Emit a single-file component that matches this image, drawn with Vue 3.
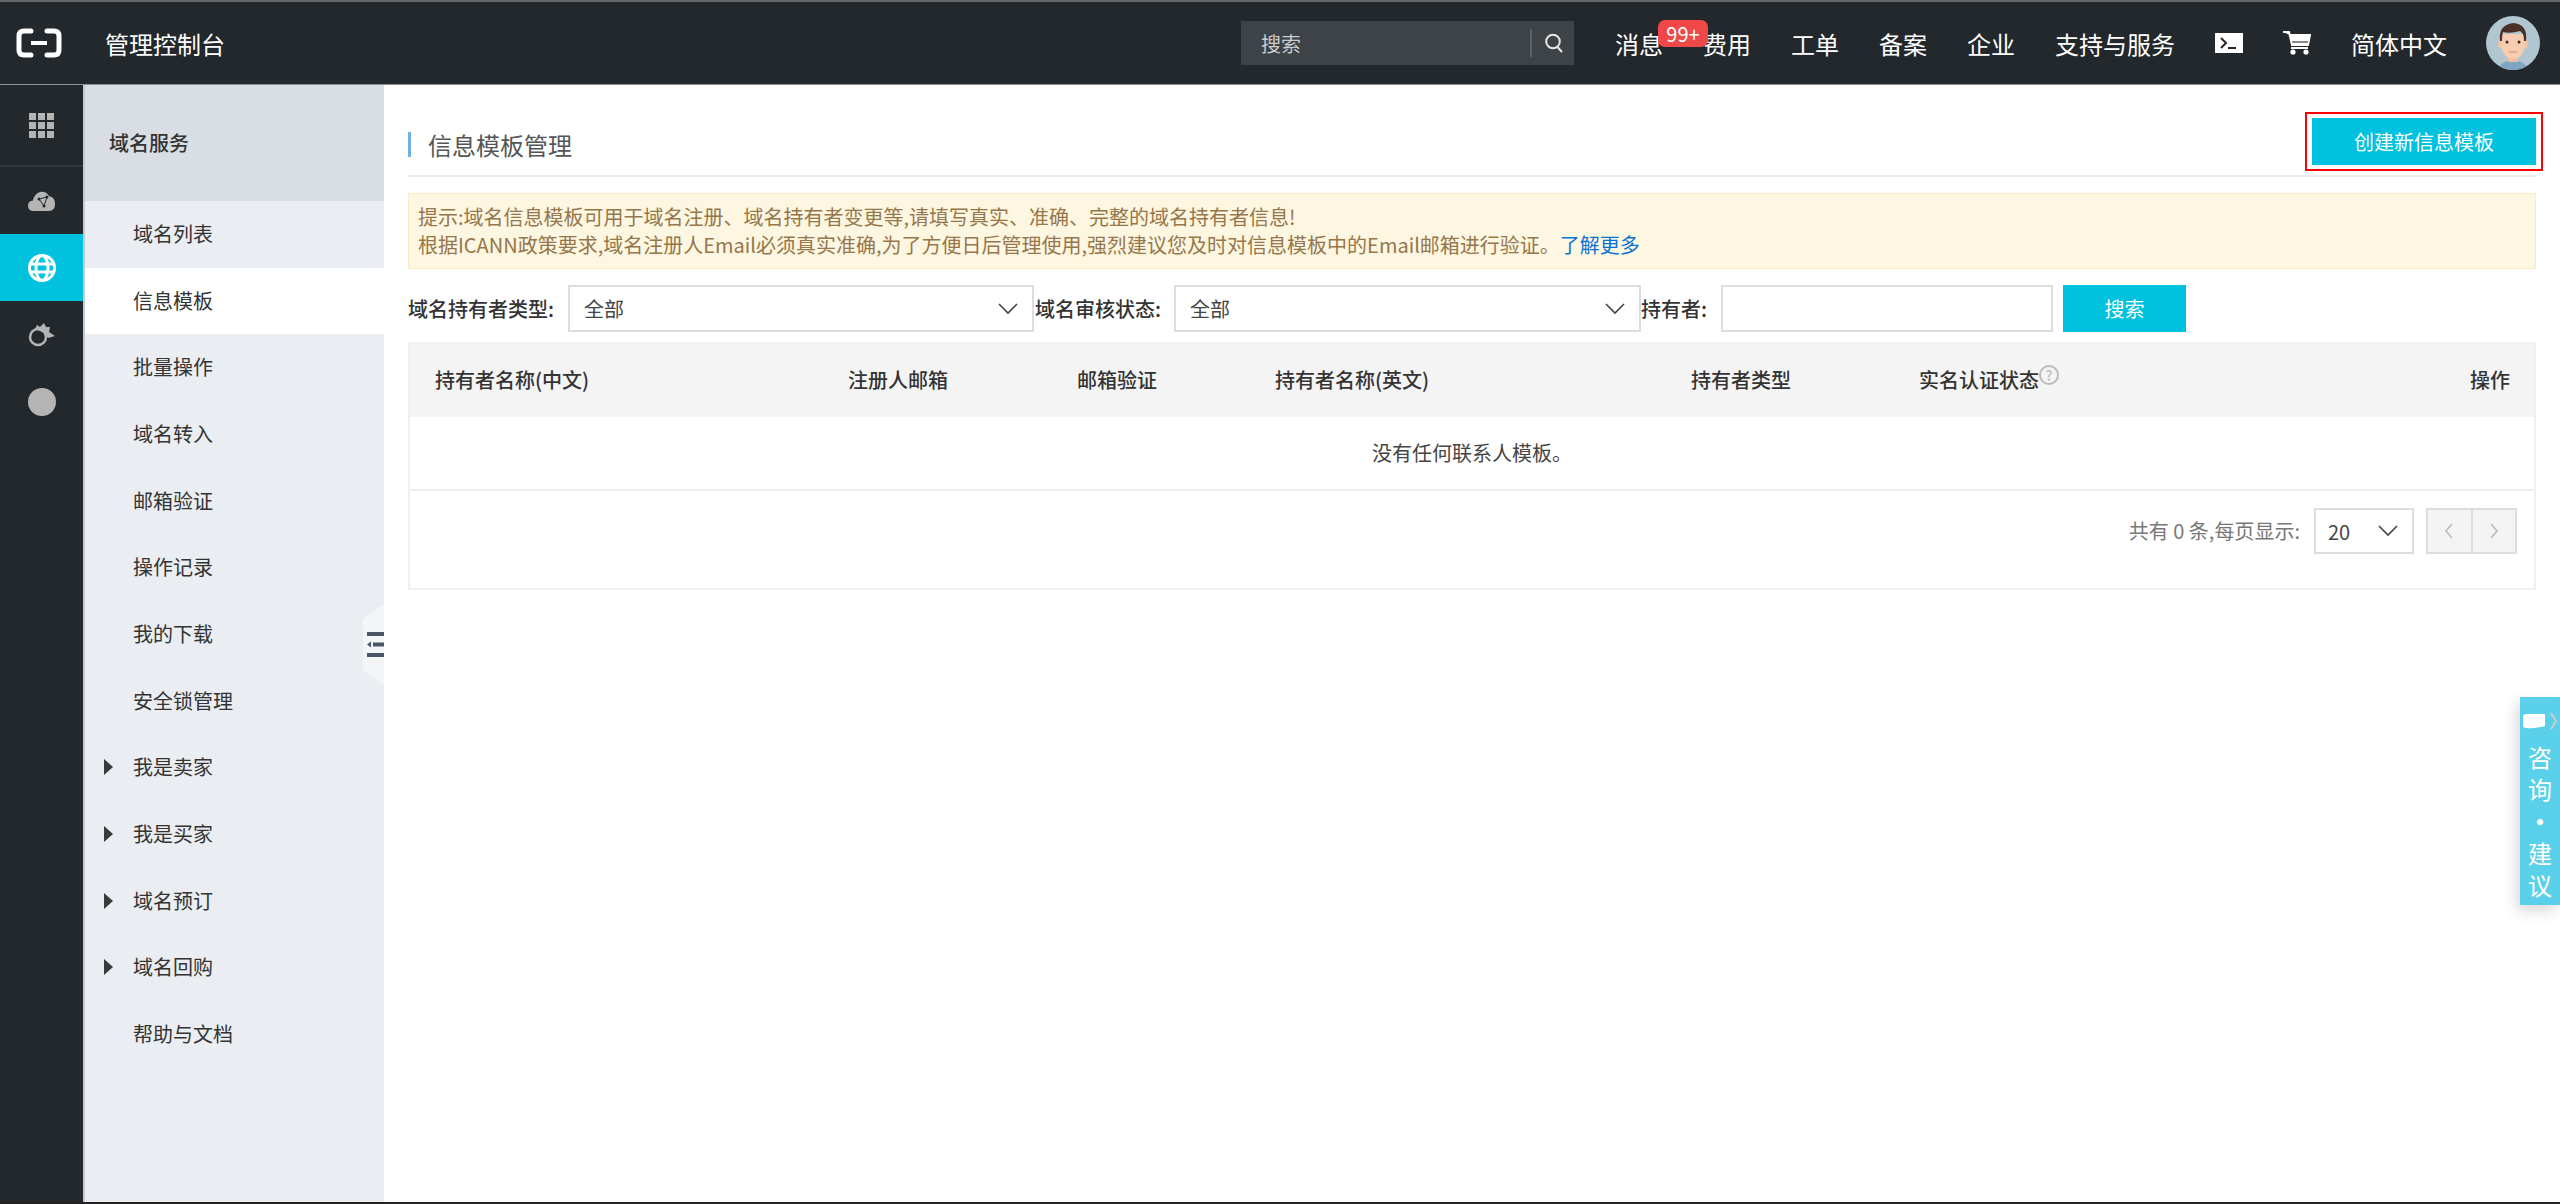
<script setup>
const navItems = ['费用', '工单', '备案', '企业', '支持与服务']

const menuItems = [
  { name: '域名列表' },
  { name: '信息模板', active: true },
  { name: '批量操作' },
  { name: '域名转入' },
  { name: '邮箱验证' },
  { name: '操作记录' },
  { name: '我的下载' },
  { name: '安全锁管理' },
  { name: '我是卖家', arrow: true },
  { name: '我是买家', arrow: true },
  { name: '域名预订', arrow: true },
  { name: '域名回购', arrow: true },
  { name: '帮助与文档' }
]
</script>

<template>
  <div class="page">
    <header class="topbar">
      <svg class="logo" viewBox="0 0 46 30" width="46" height="30">
        <path d="M15 3H8Q3 3 3 8V22Q3 27 8 27H15" fill="none" stroke="#fff" stroke-width="5" stroke-linecap="round" />
        <path d="M31 3H38Q43 3 43 8V22Q43 27 38 27H31" fill="none" stroke="#fff" stroke-width="5" stroke-linecap="round" />
        <rect x="15" y="13" width="16" height="4" fill="#fff" />
      </svg>
      <span class="brand">管理控制台</span>
      <div class="search">
        <span class="search-text">搜索</span>
        <span class="search-line"></span>
        <svg viewBox="0 0 20 20" width="20" height="20">
          <circle cx="9" cy="8.5" r="6.8" fill="none" stroke="#e6e6e6" stroke-width="2" />
          <path d="M13.5 14L18 19" stroke="#e6e6e6" stroke-width="2" />
        </svg>
      </div>
      <nav class="nav">
        <span class="nav-msg">消息<em class="badge">99+</em></span>
        <span v-for="item in navItems" :key="item">{{ item }}</span>
        <svg viewBox="0 0 28 20" width="28" height="20">
          <rect width="28" height="20" fill="#fff" />
          <path d="M6 5L11 10L6 15" fill="none" stroke="#23282d" stroke-width="2" />
          <rect x="13" y="14" width="8" height="2" fill="#23282d" />
        </svg>
        <svg viewBox="0 0 28 24" width="28" height="24">
          <path d="M0 1H6L9 14H25L27 4H7" fill="#fff" stroke="#fff" stroke-width="2" />
          <rect x="8" y="16" width="17" height="2" fill="#fff" />
          <circle cx="10" cy="21" r="2.6" fill="#fff" />
          <circle cx="23" cy="21" r="2.6" fill="#fff" />
          <rect x="9" y="10" width="16" height="2" fill="#8a8a8a" />
        </svg>
        <span>简体中文</span>
        <svg class="avatar" viewBox="0 0 54 54" width="54" height="54">
          <defs>
            <clipPath id="avatar-clip"><circle cx="27" cy="27" r="27" /></clipPath>
          </defs>
          <g clip-path="url(#avatar-clip)">
            <rect width="54" height="54" fill="#b0c6d1" />
            <path d="M12 54Q14 45 27 44Q40 45 42 54Z" fill="#7ea6c0" />
            <rect x="22" y="34" width="10" height="12" fill="#eebd9e" />
            <ellipse cx="14.500" cy="28" rx="2.500" ry="4" fill="#f0c3a5" />
            <ellipse cx="39.500" cy="28" rx="2.500" ry="4" fill="#f0c3a5" />
            <path d="M15 18V28Q16 42 27 43Q38 42 39 28V18Z" fill="#f6cdb0" />
            <path d="M14 25Q12 9 27 7Q42 8 40 25L38 25Q38 17 34 15Q24 18 17 16Q16 19 16 25Z" fill="#4a3028" />
            <circle cx="21" cy="26" r="1.500" fill="#3a2a24" />
            <circle cx="33" cy="26" r="1.500" fill="#3a2a24" />
            <path d="M23 36H31" stroke="#c98f78" stroke-width="1" />
          </g>
        </svg>
      </nav>
    </header>

    <div class="body">
      <aside class="rail">
        <div class="rail-cell rail-first">
          <svg viewBox="0 0 25 25" width="25" height="25" fill="#b4b4b4">
            <rect width="7" height="7" /><rect x="9" width="7" height="7" /><rect x="18" width="7" height="7" />
            <rect y="9" width="7" height="7" /><rect x="9" y="9" width="7" height="7" /><rect x="18" y="9" width="7" height="7" />
            <rect y="18" width="7" height="7" /><rect x="9" y="18" width="7" height="7" /><rect x="18" y="18" width="7" height="7" />
          </svg>
        </div>
        <div class="rail-cell">
          <svg viewBox="0 0 28 20" width="28" height="20">
            <path d="M6 20Q0 20 0 14.500Q0 10 5 9.500Q6 3 12 1Q18 0 21 5Q27 6 27 13Q27 20 21 20Z" fill="#b4b4b4" />
            <path d="M11 8L19 6L16 15Z" fill="none" stroke="#23282d" stroke-width="1" />
            <circle cx="11" cy="8" r="1.500" fill="#23282d" />
            <circle cx="19" cy="6" r="1.500" fill="#23282d" />
            <circle cx="16" cy="15" r="1.500" fill="#23282d" />
          </svg>
        </div>
        <div class="rail-cell rail-active">
          <svg viewBox="0 0 28 28" width="28" height="28" fill="none" stroke="#fff" stroke-width="3">
            <circle cx="14" cy="14" r="12.500" />
            <ellipse cx="14" cy="14" rx="6" ry="12.500" />
            <path d="M2 10H26M2 18H26" />
          </svg>
        </div>
        <div class="rail-cell">
          <svg viewBox="0 0 28 24" width="28" height="24">
            <circle cx="10" cy="14" r="8" fill="none" stroke="#b4b4b4" stroke-width="2.500" />
            <path d="M7 6L9 2L12 4L16 0L18 4L22 4L21 9L27 13L20 15Q17 9 7 6Z" fill="#b4b4b4" />
          </svg>
        </div>
        <div class="rail-cell">
          <span class="rail-dot"></span>
        </div>
      </aside>

      <aside class="menu">
        <div class="menu-title">域名服务</div>
        <a v-for="item in menuItems" :key="item.name" class="menu-item" :class="{ current: item.active }">
          <i v-if="item.arrow" class="tri"></i>
          {{ item.name }}
        </a>
        <div class="fold">
          <svg viewBox="0 0 17 25" width="17" height="25" fill="#4a5568">
            <rect width="17" height="4" />
            <rect x="6" y="10.500" width="11" height="4" />
            <path d="M0 12.500L4 9.500V15.500Z" />
            <rect y="21" width="17" height="4" />
          </svg>
        </div>
      </aside>

      <main class="content">
        <div class="title-row">
          <h1 class="title">信息模板管理</h1>
          <div class="mark">
            <button class="btn-create">创建新信息模板</button>
          </div>
        </div>

        <div class="notice">
          <p>提示:域名信息模板可用于域名注册、域名持有者变更等,请填写真实、准确、完整的域名持有者信息!</p>
          <p>根据ICANN政策要求,域名注册人Email必须真实准确,为了方便日后管理使用,强烈建议您及时对信息模板中的Email邮箱进行验证。<a class="more">了解更多</a></p>
        </div>

        <div class="filters">
          <label class="lab lab-a">域名持有者类型:</label>
          <div class="sel sel-a">
            <span>全部</span>
            <svg viewBox="0 0 20 12" width="20" height="12"><path d="M1 1L10 10L19 1" fill="none" stroke="#444" stroke-width="1.600" /></svg>
          </div>
          <label class="lab lab-b">域名审核状态:</label>
          <div class="sel sel-b">
            <span>全部</span>
            <svg viewBox="0 0 20 12" width="20" height="12"><path d="M1 1L10 10L19 1" fill="none" stroke="#444" stroke-width="1.600" /></svg>
          </div>
          <label class="lab lab-c">持有者:</label>
          <input class="holder" type="text" />
          <button class="btn-search">搜索</button>
        </div>

        <div class="table">
          <div class="thead">
            <span>持有者名称(中文)</span>
            <span>注册人邮箱</span>
            <span>邮箱验证</span>
            <span>持有者名称(英文)</span>
            <span>持有者类型</span>
            <span class="th-help">实名认证状态<i class="help">?</i></span>
            <span class="th-op">操作</span>
          </div>
          <div class="empty">没有任何联系人模板。</div>
          <div class="foot">
            <span class="count">共有 0 条,每页显示:</span>
            <div class="sel sel-size">
              <span>20</span>
              <svg viewBox="0 0 20 12" width="20" height="12"><path d="M1 1L10 10L19 1" fill="none" stroke="#444" stroke-width="1.600" /></svg>
            </div>
            <div class="pager">
              <span class="pg">
                <svg viewBox="0 0 10 18" width="10" height="18"><path d="M8 2L2 9L8 16" fill="none" stroke="#bbb" stroke-width="1.600" /></svg>
              </span>
              <span class="pg">
                <svg viewBox="0 0 10 18" width="10" height="18"><path d="M2 2L8 9L2 16" fill="none" stroke="#bbb" stroke-width="1.600" /></svg>
              </span>
            </div>
          </div>
        </div>
      </main>
    </div>

    <div class="consult">
      <div class="consult-head">
        <svg viewBox="0 0 26 16" width="26" height="16">
          <path d="M3 1H22V13Q12 16 3 15Q0 15 0 12V4Q0 1 3 1Z" fill="#fff" />
        </svg>
        <svg viewBox="0 0 8 18" width="8" height="18"><path d="M1 1L6 9L1 17" fill="none" stroke="#ccc" stroke-width="2" /></svg>
      </div>
      <span>咨</span>
      <span>询</span>
      <span class="consult-dot">·</span>
      <span>建</span>
      <span>议</span>
    </div>
  </div>
</template>

<style>
html, body {
  margin: 0;
  background: #fff;
}
</style>

<style scoped>
* {
  box-sizing: border-box;
}

.page {
  position: relative;
  display: flex;
  flex-direction: column;
  height: 1204px;
  overflow: hidden;
  font-family: "Noto Sans CJK SC", "Liberation Sans", sans-serif;
  font-size: 20px;
  color: #333;
  border-bottom: 2px solid #222;
}

/* top bar */
.topbar {
  display: flex;
  align-items: center;
  flex: none;
  height: 85px;
  padding: 0 20px 0 16px;
  background: #23282d;
  border-top: 2px solid #63676a;
  border-bottom: 1px solid #8d9094;
  color: #fff;
  font-size: 24px;
}

.brand {
  margin-left: 43px;
}

.search {
  display: flex;
  align-items: center;
  width: 333px;
  height: 44px;
  margin-left: auto;
  margin-right: 41px;
  padding: 0 10px 0 20px;
  background: #3e4347;
  color: #ccc;
  font-size: 20px;
}

.search-text {
  flex: 1;
}

.search-line {
  width: 2px;
  height: 28px;
  margin-right: 12px;
  background: #5d6165;
}

.nav {
  display: flex;
  align-items: center;
  gap: 40px;
}

.nav-msg {
  position: relative;
}

.badge {
  position: absolute;
  left: 43px;
  top: -6px;
  width: 50px;
  height: 27px;
  border-radius: 7px;
  background: #f04848;
  font-style: normal;
  font-size: 20px;
  line-height: 27px;
  text-align: center;
}

.avatar {
  margin-left: -1px;
}

/* left rail */
.body {
  display: flex;
  flex: 1;
  min-height: 0;
}

.rail {
  flex: none;
  width: 85px;
  background: #23282d;
  border-right: 2px solid #c5cad0;
}

.rail-cell {
  display: flex;
  align-items: center;
  justify-content: center;
  height: 67px;
}

.rail-first {
  height: 82px;
  border-bottom: 2px solid #33383c;
}

.rail-active {
  background: #00c1de;
}

.rail-dot {
  width: 28px;
  height: 28px;
  border-radius: 50%;
  background: #b4b4b4;
}

/* second menu */
.menu {
  position: relative;
  flex: none;
  width: 299px;
  background: #eaedf1;
}

.menu-title {
  height: 116px;
  padding-left: 24px;
  background: #d9dde4;
  font-weight: 500;
  line-height: 116px;
}

.menu-item {
  position: relative;
  display: block;
  height: 66.67px;
  padding-left: 48px;
  line-height: 66.67px;
}

.current {
  background: #fff;
}

.tri {
  position: absolute;
  left: 19px;
  top: 25px;
  border-left: 9px solid #3a3a3a;
  border-top: 8px solid transparent;
  border-bottom: 8px solid transparent;
}

.fold {
  position: absolute;
  right: 0;
  top: 519px;
  display: flex;
  align-items: center;
  justify-content: flex-end;
  width: 21px;
  height: 81px;
  background: #f4f5f7;
  clip-path: polygon(100% 0, 100% 100%, 0 82%, 0 18%);
}

/* main */
.content {
  flex: 1;
  min-width: 0;
  padding: 0 24px;
}

.title-row {
  display: flex;
  align-items: center;
  justify-content: space-between;
  height: 92px;
  padding: 27px 0 4px;
  border-bottom: 2px solid #eee;
}

.title {
  margin: 6px 0 0;
  padding-left: 17px;
  border-left: 3px solid #71b2e6;
  font-size: 24px;
  font-weight: 400;
  line-height: 25px;
  color: #555;
}

.mark {
  width: 238px;
  height: 59px;
  margin-right: -7px;
  padding: 4px 5px;
  border: 2px solid #f00;
}

.btn-create {
  display: block;
  width: 224px;
  height: 47px;
  border: 0;
  background: #00c1de;
  color: #fff;
  font: inherit;
}

.notice {
  height: 76px;
  margin-top: 16px;
  padding: 9px 9px;
  background: #fdf6e1;
  border: 1px solid #faeac8;
  color: #96764a;
  line-height: 28px;
}

.notice p {
  margin: 0;
}

.more {
  color: #0a73d1;
}

.filters {
  display: flex;
  align-items: center;
  height: 47px;
  margin-top: 16px;
}

.lab {
  flex: none;
  font-weight: 500;
}

.lab-a {
  width: 160px;
}

.lab-b {
  width: 140px;
  padding-left: 1px;
}

.lab-c {
  width: 80px;
}

.sel {
  display: flex;
  align-items: center;
  justify-content: space-between;
  flex: none;
  height: 47px;
  padding: 0 14px;
  background: #fff;
  border: 2px solid #ddd;
  color: #444;
}

.sel-a {
  width: 466px;
}

.sel-b {
  width: 467px;
}

.sel-size {
  width: 100px;
  height: 46px;
  padding: 0 14px 0 12px;
}

.holder {
  flex: none;
  width: 332px;
  height: 47px;
  border: 2px solid #ddd;
  outline: none;
}

.btn-search {
  flex: none;
  width: 123px;
  height: 47px;
  margin-left: 10px;
  border: 0;
  background: #00c1de;
  color: #fff;
  font: inherit;
}

/* table */
.table {
  margin-top: 10px;
  border: 2px solid #f0f0f0;
  border-top: 0;
}

.thead {
  display: grid;
  grid-template-columns: 413px 229px 198px 416px 228px 1fr 120px;
  align-items: center;
  height: 75px;
  padding-left: 25px;
  padding-right: 24px;
  background: #f4f4f4;
  font-weight: 500;
}

.th-help {
  display: flex;
  align-items: flex-start;
}

.help {
  width: 20px;
  height: 20px;
  border: 2px solid #bbb;
  border-radius: 50%;
  color: #bbb;
  font-size: 14px;
  font-style: normal;
  line-height: 17px;
  text-align: center;
}

.th-op {
  text-align: right;
}

.empty {
  height: 74px;
  border-bottom: 2px solid #eee;
  color: #444;
  line-height: 72px;
  text-align: center;
}

.foot {
  display: flex;
  justify-content: flex-end;
  height: 97px;
  padding: 17px 17px 0 0;
}

.count {
  margin-right: 14px;
  color: #777;
  line-height: 46px;
}

.pager {
  display: flex;
  width: 91px;
  height: 46px;
  margin-left: 12px;
  border: 2px solid #ddd;
  background: #f4f4f4;
}

.pg {
  display: flex;
  align-items: center;
  justify-content: center;
  flex: 1;
}

.pg + .pg {
  border-left: 2px solid #ddd;
}

/* consult tab, floats over the page */
.consult {
  position: absolute;
  right: 0;
  top: 697px;
  display: flex;
  flex-direction: column;
  align-items: center;
  width: 40px;
  height: 208px;
  padding-top: 14px;
  background: #5bd0ea;
  box-shadow: -4px 6px 14px rgba(0, 0, 0, 0.15);
  color: #fff;
  font-size: 24px;
  line-height: 32px;
}

.consult-head {
  display: flex;
  align-items: center;
  gap: 1px;
  height: 20px;
  margin-bottom: 10px;
}

.consult-dot {
  font-weight: 700;
}
</style>
